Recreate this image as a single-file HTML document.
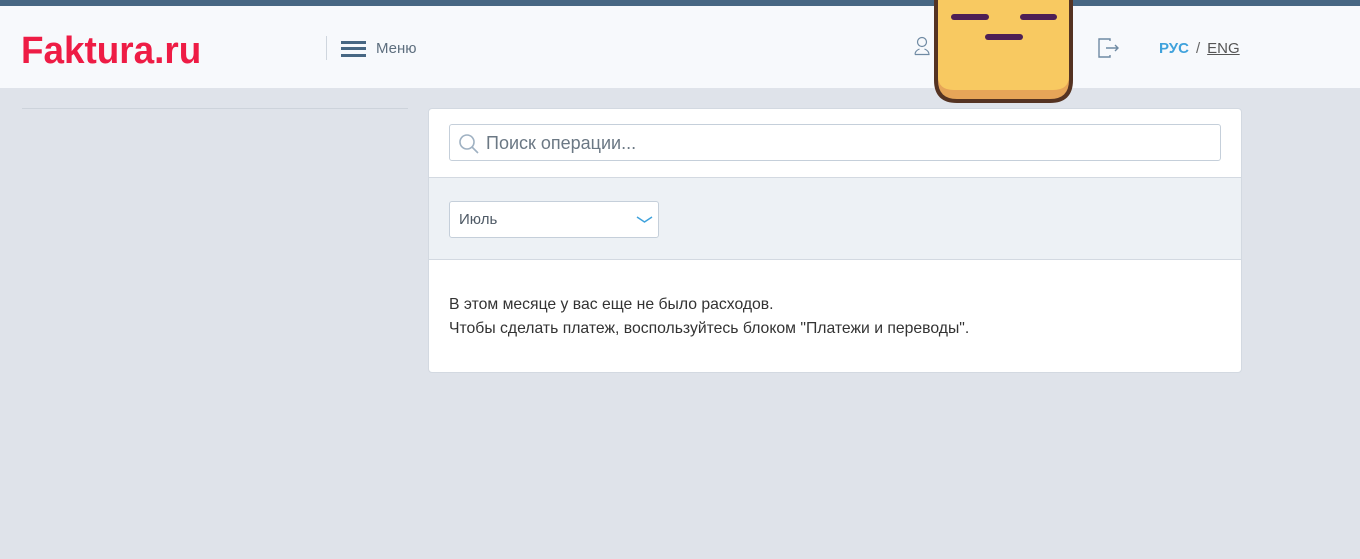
<!DOCTYPE html>
<html><head><meta charset="utf-8"><style>
*{box-sizing:border-box;margin:0;padding:0}
body{width:1360px;height:559px;background:#dfe3ea;font-family:"Liberation Sans",sans-serif;position:relative;overflow:hidden}
.top{position:absolute;left:0;top:0;width:1360px;height:6px;background:#476783}
.hdr{position:absolute;left:0;top:6px;width:1360px;height:82px;background:#f7f9fc}
.logo{position:absolute;left:21px;top:25px;font-size:38px;font-weight:bold;color:#ee1c45;line-height:40px;transform:scaleX(0.97);transform-origin:left top;white-space:nowrap}
.sep{position:absolute;left:326px;top:30px;width:1px;height:24px;background:#cfd6de}
.burger{position:absolute;left:341px;width:25px;height:3px;background:#476783}
.menu{position:absolute;left:376px;top:34px;font-size:15px;color:#5d6e7e}
.lang{position:absolute;left:1159px;top:34px;font-size:15px}
.side{position:absolute;left:22px;top:108px;width:386px;height:1px;background:#cdd3db}
.card{position:absolute;left:428px;top:108px;width:814px;height:265px;background:#fff;border:1px solid #d3d9e1;border-radius:4px;overflow:hidden}
.search{position:absolute;left:20px;top:15px;width:772px;height:37px;border:1px solid #c5cfda;border-radius:3px;font-size:18px;color:#6b7884;padding:8px 0 0 36px}
.grey{position:absolute;left:0;top:68px;width:814px;height:83px;background:#edf1f5;border-top:1px solid #d3d9e1;border-bottom:1px solid #d3d9e1}
.sel{position:absolute;left:20px;top:23px;width:210px;height:37px;background:#fff;border:1px solid #c5cfda;border-radius:3px;font-size:15px;color:#4f5a66;padding:9px 0 0 9px}
.msg{position:absolute;left:20px;top:184px;font-size:15.75px;line-height:24px;color:#333;white-space:nowrap}
</style></head><body>
<div class="top"></div>
<div class="hdr">
<div class="logo">Faktura.ru</div>
<div class="sep"></div>
<div class="burger" style="top:35px"></div><div class="burger" style="top:41px"></div><div class="burger" style="top:48px"></div>
<div class="menu">Меню</div>
<svg style="position:absolute;left:913px;top:30px" width="18" height="20" viewBox="0 0 18 20" fill="none" stroke="#6f8aa3" stroke-width="1.2"><circle cx="9" cy="6" r="4.5"/><path d="M2 18.5h14c0-3-2-4.5-4.5-5.5M6.5 13C4 14 2 15.5 2 18.5"/></svg>
<svg style="position:absolute;left:1098px;top:32px" width="22" height="20" viewBox="0 0 22 20" fill="none" stroke="#6f8aa3" stroke-width="1.4"><path d="M12 3V1H1v18h11v-2"/><path d="M8 10h12M17 7l3 3-3 3"/></svg>
<div class="lang"><b style="color:#3fa2dc">РУС</b><span style="color:#666;margin:0 7px">/</span><span style="color:#555;text-decoration:underline">ENG</span></div>
</div>
<svg style="position:absolute;left:934px;top:0" width="140" height="104" viewBox="0 0 140 104"><path d="M2 0V80Q2 101 23 101H116Q137 101 137 80V0Z" fill="#e6a558" stroke="#553322" stroke-width="4"/><path d="M4 0V76Q4 90 20 90H119Q135 90 135 76V0Z" fill="#f8c961"/><g stroke="#4e1f55" stroke-width="6" stroke-linecap="round"><line x1="20" y1="17" x2="52" y2="17"/><line x1="89" y1="17" x2="120" y2="17"/><line x1="54" y1="37" x2="86" y2="37"/></g></svg>
<div class="side"></div>
<div class="card">
<div class="search"><svg style="position:absolute;left:8px;top:8px" width="22" height="22" viewBox="0 0 22 22" fill="none" stroke="#9fb1c2" stroke-width="1.6"><circle cx="9" cy="9" r="7"/><path d="M14 14l6 6"/></svg>Поиск операции...</div>
<div class="grey"><div class="sel">Июль<svg style="position:absolute;left:186px;top:14px" width="17" height="8" viewBox="0 0 17 8" fill="none" stroke="#3fa2dc" stroke-width="1.5"><path d="M1 1l7.5 5L16 1"/></svg></div></div>
<div class="msg">В этом месяце у вас еще не было расходов.<br>Чтобы сделать платеж, воспользуйтесь блоком "Платежи и переводы".</div>
</div>
</body></html>
